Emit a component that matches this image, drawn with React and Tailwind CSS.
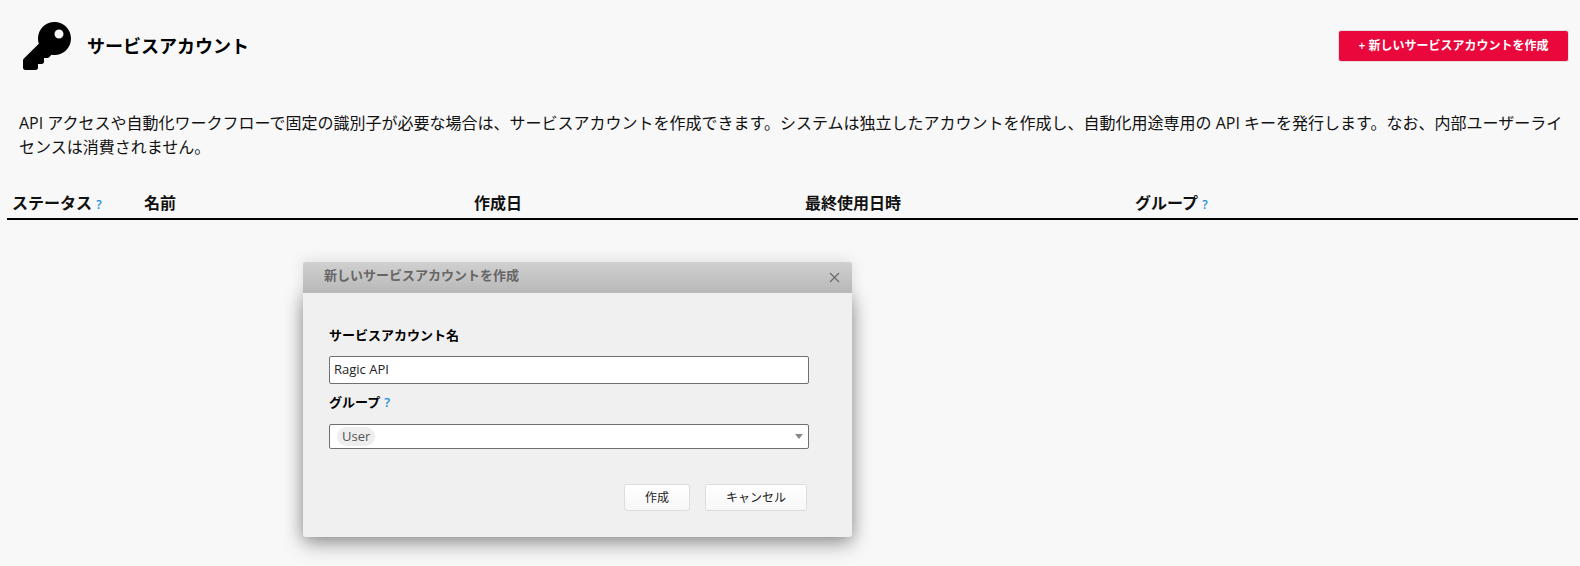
import { FaKey } from 'react-icons/fa';

const font = { fontFamily: '"Open Sans", "Noto Sans CJK JP", sans-serif' };

function Help({ className = '' }) {
  return <span className={`font-semibold text-[#1a8fd8] ${className}`}>?</span>;
}

function Dialog() {
  return (
    <div className="absolute left-[303px] top-[261px] flex h-[276px] w-[549px] flex-col rounded-[3px] shadow-[0_0_14px_rgba(0,0,0,0.12)]">
      <div className="relative z-10 flex h-[32px] items-center justify-between rounded-t-[3px] border-t border-t-[#eeeeee] bg-gradient-to-b from-[#d0d0d0] to-[#b8b8b8] pb-[3px] pl-[21px] pr-[12px]">
        <span className="text-[13px] font-semibold text-[#666666]">新しいサービスアカウントを作成</span>
        <svg width="11" height="11" viewBox="0 0 11 11" className="mt-[3px] stroke-[#666666]">
          <path d="M1 1 L10 10 M10 1 L1 10" strokeWidth="1.1" fill="none" />
        </svg>
      </div>
      <div className="flex-1 rounded-b-[3px] bg-[#f0f0f0] px-[26px] shadow-[0_6px_20px_rgba(0,0,0,0.4)]">
        <div className="mt-[32px] text-[13px] font-bold leading-[20px] text-black">サービスアカウント名</div>
        <div className="mt-[11px] flex h-[28px] w-[480px] items-center rounded-[2px] border border-[#707070] bg-white px-[4px] text-[13px] text-[#222222]">
          Ragic API
        </div>
        <div className="mt-[8px] flex items-center gap-[4px] text-[13px] font-bold leading-[20px] text-black">
          グループ <Help className="text-[13px]" />
        </div>
        <div className="mt-[12px] flex h-[25px] w-[480px] items-center justify-between rounded-[2px] border border-[#707070] bg-white pl-[7px] pr-[5px]">
          <span className="rounded-full bg-[#eeeeee] px-[5px] text-[13px] leading-[19px] text-[#555555]">User</span>
          <span className="h-0 w-0 border-x-[4px] border-t-[5px] border-x-transparent border-t-[#888888]" />
        </div>
        <div className="mt-[35px] flex justify-end gap-[15px] pr-[19px]">
          <button className="h-[27px] w-[66px] rounded-[3px] border border-[#dddddd] bg-gradient-to-b from-white to-[#f7f7f7] text-[12px] text-[#222222]">
            作成
          </button>
          <button className="h-[27px] w-[102px] rounded-[3px] border border-[#dddddd] bg-gradient-to-b from-white to-[#f7f7f7] text-[12px] text-[#222222]">
            キャンセル
          </button>
        </div>
      </div>
    </div>
  );
}

export default function App() {
  return (
    <div className="relative h-[566px] w-[1580px] overflow-hidden bg-[#f8f8f8]" style={font}>
      <div className="flex h-[100px] items-start justify-between pl-[23px] pr-[11px]">
        <div className="mt-[22px] flex items-center gap-[16px]">
          <FaKey className="h-[48px] w-[48px] text-black" />
          <h1 className="text-[18px] font-bold text-black">サービスアカウント</h1>
        </div>
        <button className="mt-[30px] h-[32px] w-[231px] rounded-[3px] border border-[#e6dfe1] bg-[#e9073c] text-[12px] font-semibold text-white">
          + 新しいサービスアカウントを作成
        </button>
      </div>
      <p className="mt-[11px] pl-[19px] pr-[15px] text-[16px] leading-[24px] text-[#111111]">
        API アクセスや自動化ワークフローで固定の識別子が必要な場合は、サービスアカウントを作成できます。システムは独立したアカウントを作成し、自動化用途専用の API キーを発行します。なお、内部ユーザーライセンスは消費されません。
      </p>
      <div className="mx-[7px] mt-[32px] grid h-[29px] w-[1571px] grid-cols-[132px_330px_331px_330px_1fr] content-start border-b-2 border-black pl-[5px] text-[16px] font-bold text-[#111111]">
        <div>ステータス <Help className="text-[12px]" /></div>
        <div>名前</div>
        <div>作成日</div>
        <div>最終使用日時</div>
        <div>グループ <Help className="text-[12px]" /></div>
      </div>
      <Dialog />
    </div>
  );
}
